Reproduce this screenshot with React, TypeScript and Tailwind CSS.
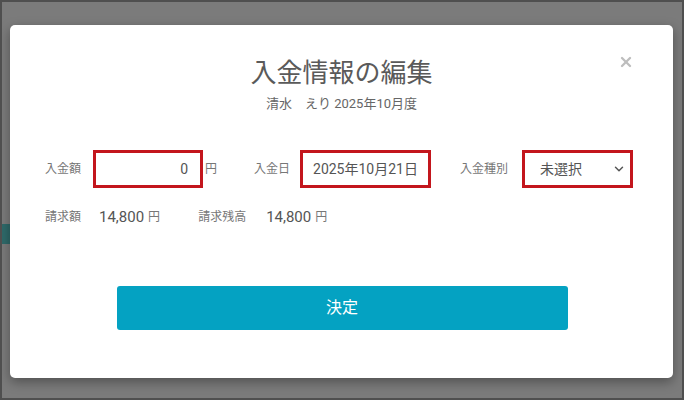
import React from 'react';
import { ChevronDown, X } from 'lucide-react';

const font = { fontFamily: "Roboto, 'Noto Sans CJK JP', sans-serif" };

export default function App() {
  return (
    <div
      className="relative w-[684px] h-[400px] overflow-hidden border-2 border-[#4f4f4f] bg-[#7b7b7b]"
      style={font}
    >
      {/* page behind the overlay, only the left edge peeks out */}
      <div className="absolute left-0 top-[222px] w-[8px] h-[20px] bg-[#2f6a6a]" />

      <div className="pt-[23px] pl-[8px]">
        <div className="relative w-[663px] h-[353px] rounded-[5px] bg-white shadow-[0_4px_12px_rgba(0,0,0,0.35)]">
          <button className="absolute right-[39px] top-[29px] text-[#bdbdbd]">
            <X size={16} strokeWidth={3.5} />
          </button>

          <div className="pt-[31px] text-center">
            <h2 className="text-[26px] leading-[34px] text-[#5a5a5a]">入金情報の編集</h2>
            <p className="mt-[5px] text-[13px] leading-[18px] text-[#666]">清水　えり 2025年10月度</p>
          </div>

          {/* 入金額 / 入金日 / 入金種別 */}
          <div className="mt-[37px] flex items-center pl-[35px] text-[12px] text-[#777]">
            <span className="w-[48px]">入金額</span>
            <div className="flex h-[38px] w-[110px] items-center justify-end border-[3px] border-[#c3161d] pr-[12px] text-[14px] text-[#555]">
              0
            </div>
            <span className="ml-[2px]">円</span>
            <span className="ml-[37px] w-[46px]">入金日</span>
            <div className="flex h-[38px] w-[131px] items-center border-[3px] border-[#c3161d] pl-[10px] text-[14px] text-[#555]">
              2025年10月21日
            </div>
            <span className="ml-[29px] w-[62px]">入金種別</span>
            <div className="flex h-[38px] w-[111px] items-center justify-between border-[3px] border-[#c3161d] pl-[15px] pr-[4px] text-[14px] text-[#555]">
              <span>未選択</span>
              <ChevronDown size={14} strokeWidth={2.5} />
            </div>
          </div>

          {/* 請求額 / 請求残高 */}
          <div className="mt-[18px] flex items-center pl-[35px] text-[12px] text-[#777]">
            <span className="w-[54px]">請求額</span>
            <span className="text-[15px] text-[#555]">14,800</span>
            <span className="ml-[4px]">円</span>
            <span className="ml-[38px] w-[68px]">請求残高</span>
            <span className="text-[15px] text-[#555]">14,800</span>
            <span className="ml-[4px]">円</span>
          </div>

          <div className="mt-[57px] flex justify-center pl-[1px]">
            <button className="h-[44px] w-[451px] rounded-[3px] bg-[#04a2c2] text-[16px] text-white">決定</button>
          </div>
        </div>
      </div>
    </div>
  );
}
